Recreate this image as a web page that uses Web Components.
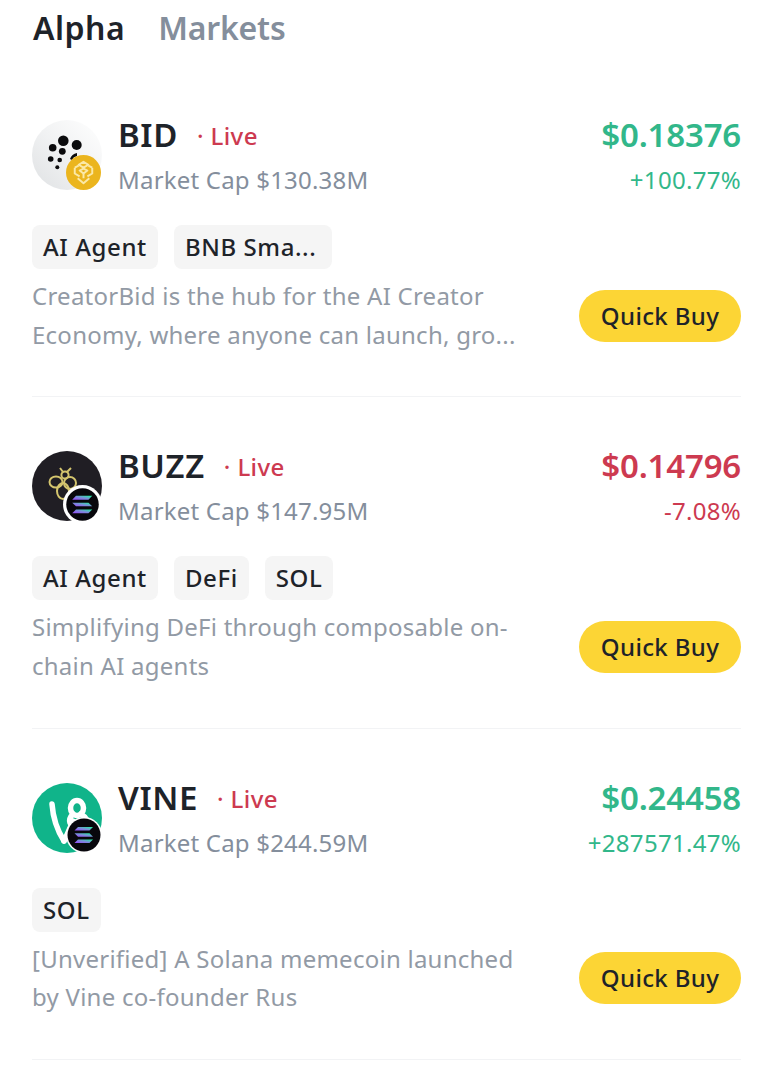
<!DOCTYPE html>
<html><head><meta charset="utf-8"><style>
html,body{margin:0;padding:0;background:#fff;font-family:"Noto Sans","Liberation Sans",sans-serif;}
</style></head><body>
<alpha-page>
<market-tabs></market-tabs>
<token-row name="BID" cap="$130.38M" price="$0.18376" change="+100.77%" dir="up" tags="AI Agent|BNB Sma..." logo="bid" chain="bnb" desc="CreatorBid is the hub for the AI Creator|Economy, where anyone can launch, gro..."></token-row>
<token-row name="BUZZ" cap="$147.95M" price="$0.14796" change="-7.08%" dir="down" tags="AI Agent|DeFi|SOL" logo="buzz" chain="sol" desc="Simplifying DeFi through composable on-|chain AI agents"></token-row>
<token-row name="VINE" cap="$244.59M" price="$0.24458" change="+287571.47%" dir="up" tags="SOL" logo="vine" chain="sol2" desc="[Unverified] A Solana memecoin launched|by Vine co-founder Rus"></token-row>
</alpha-page>
<script>
class AlphaPage extends HTMLElement{constructor(){super();this.attachShadow({mode:'open'}).innerHTML=`<style>:host{display:block;padding:0 32px 0 32px;box-sizing:border-box;width:773px;height:1076px;overflow:hidden;background:#fff}</style><slot></slot>`}}
class MarketTabs extends HTMLElement{constructor(){super();this.attachShadow({mode:'open'}).innerHTML=`<style>
:host{display:flex;gap:33px;height:66px;padding:7px 0 0 1px;box-sizing:border-box;font:600 32px/42px "Noto Sans",sans-serif}
.a{color:#1e2329;letter-spacing:.5px}.b{color:#848e9c;letter-spacing:-.2px}</style><span class="a">Alpha</span><span class="b">Markets</span>`}}
const LOGOS={
bid:`<defs><linearGradient id="g" x1="0" y1="1" x2="1" y2="0"><stop offset="0" stop-color="#dfe1e3"/><stop offset=".5" stop-color="#f1f2f3"/><stop offset="1" stop-color="#fff"/></linearGradient></defs><circle cx="35" cy="35" r="35" fill="url(#g)"/><g fill="#0b0b0d"><circle cx="31.3" cy="20.7" r="5.3"/><circle cx="44.7" cy="25" r="5"/><circle cx="20.7" cy="27.7" r="3.8"/><circle cx="30.3" cy="31.3" r="3.4"/><circle cx="18.7" cy="39" r="2.8"/><circle cx="27.7" cy="40" r="2.3"/><circle cx="25.3" cy="47.3" r="2"/><path d="M38 39a9 9 0 0 1 7-6v3a7 7 0 0 0-5 4z"/></g>`,
buzz:`<circle cx="35" cy="35" r="35" fill="#201e24"/><g fill="none" stroke="#d4c56e" stroke-width="2"><ellipse cx="24" cy="31" rx="6.5" ry="5.5"/><ellipse cx="38" cy="32" rx="6" ry="6"/><ellipse cx="31" cy="40" rx="6" ry="8"/><circle cx="33" cy="24" r="3.6"/><path d="M31 21l-3-4M35 21l4-4"/></g>`,
vine:`<circle cx="35" cy="35" r="35" fill="#10b48a"/><g fill="none" stroke="#fff" stroke-width="5.5" stroke-linecap="round" stroke-linejoin="round"><path d="M20 21c1 14 5 26 12 37"/><path d="M32 58c3-6 6-13 9-20"/><ellipse cx="45" cy="25" rx="6.5" ry="7.5"/><path d="M41 31c-3 3-4 6-3 9"/><path d="M49 31c5 3 7 7 7 12"/></g>`};
const SOL=`<g fill="url(#s)"><path d="M12 10h15l-3.5 3.5H8.5z"/><path d="M8.5 16.3h15l3.5 3.4H12z"/><path d="M12 22.5h15L23.5 26H8.5z"/></g>`;
const SDEF=`<defs><linearGradient id="s" x1="0" y1="1" x2="1" y2="0"><stop offset="0" stop-color="#9945ff"/><stop offset=".5" stop-color="#7a8ed8"/><stop offset="1" stop-color="#19fb9b"/></linearGradient></defs>`;
const CHAINS={
bnb:{size:35,right:1,bottom:0,svg:`<circle cx="18" cy="18" r="18" fill="#ebb51e"/><g fill="none" stroke="#fbe9a8" stroke-width="2" stroke-linejoin="round"><path d="M18 7l5 3-5 3-5-3z"/><path d="M9 13v6l5 3M27 13v6l-5 3"/><path d="M9 13l4-2M27 13l-4-2"/><path d="M14 16l4-2 4 2-4 3z"/><path d="M18 19v5M12 24l6 5 6-5"/></g>`},
sol:{size:39,right:0,bottom:-3,svg:`${SDEF}<circle cx="18" cy="18" r="18" fill="#fff"/><circle cx="18" cy="18" r="15" fill="#08070c"/>${SOL}`},
sol2:{size:36,right:0,bottom:0,svg:`${SDEF}<circle cx="18" cy="18" r="18" fill="#fff"/><circle cx="18" cy="18" r="16.5" fill="#08070c"/>${SOL}`}};
let uid=0;
class TokenLogo extends HTMLElement{connectedCallback(){const u=++uid;const fix=s=>s.replace(/id="g"/g,`id="g${u}"`).replace(/url\(#g\)/g,`url(#g${u})`).replace(/id="s"/g,`id="s${u}"`).replace(/url\(#s\)/g,`url(#s${u})`);
const c=CHAINS[this.getAttribute('chain')];
this.attachShadow({mode:'open'}).innerHTML=`<style>:host{display:block;position:relative;width:70px;height:70px;flex:none}svg{display:block}.c{position:absolute;right:${c.right}px;bottom:${c.bottom}px}</style><svg width="70" height="70" viewBox="0 0 70 70">${fix(LOGOS[this.getAttribute('logo')])}</svg><svg class="c" width="${c.size}" height="${c.size}" viewBox="0 0 36 36">${fix(c.svg)}</svg>`}}
class TagChip extends HTMLElement{constructor(){super();this.attachShadow({mode:'open'}).innerHTML=`<style>:host{display:inline-flex;align-items:center;height:44px;padding:0 11px;border-radius:8px;background:#f5f5f5;color:#1e2329;font:500 24px/44px "Noto Sans",sans-serif;letter-spacing:.6px;white-space:nowrap}</style><slot></slot>`}}
class QuickBuy extends HTMLElement{constructor(){super();this.attachShadow({mode:'open'}).innerHTML=`<style>:host{display:flex;align-items:center;justify-content:center;width:162px;height:52px;border-radius:26px;background:#fcd535;color:#1e2329;font:500 24px/52px "Noto Sans",sans-serif;letter-spacing:.35px;white-space:nowrap;flex:none}</style><slot></slot>`}}
class TokenRow extends HTMLElement{connectedCallback(){const g=k=>this.getAttribute(k);
const col=g('dir')=='up'?'#32b78a':'#cd3a50';
this.attachShadow({mode:'open'}).innerHTML=`<style>
:host{display:block;height:331.3px;box-sizing:border-box;padding-top:54px;border-bottom:1px solid #f2f3f5;font-family:"Noto Sans",sans-serif}
.top{display:flex;align-items:flex-start;height:105px}
.info{margin-left:16px;flex:1}
.nm{display:flex;align-items:center;height:44px;margin-top:-7px;font:600 33px/44px "Noto Sans",sans-serif;color:#1e2329;letter-spacing:.6px}
.live{margin-left:19px;margin-top:2px;font:500 24px/44px "Noto Sans",sans-serif;color:#cd3a50;letter-spacing:.4px}
.cap{font:400 24px/34px "Noto Sans",sans-serif;color:#848e9c;margin-top:6px;letter-spacing:.2px}
.r{text-align:right;margin-top:-7px}
.p{font:600 33px/44px "Noto Sans",sans-serif;color:${col};letter-spacing:-.2px}
.c{font:400 24px/34px "Noto Sans",sans-serif;color:${col};margin-top:6px;letter-spacing:.3px}
.tags{display:flex;gap:16px}
tag-chip.wide{width:136px}
.bot{display:flex;align-items:center;justify-content:space-between;margin-top:8px}
.d{font:400 24px/38.5px "Noto Sans",sans-serif;color:#929aa5;white-space:nowrap;letter-spacing:.25px}
</style>
<div class="top"><token-logo logo="${g('logo')}" chain="${g('chain')}"></token-logo>
<div class="info"><div class="nm"><span>${g('name')}</span><span class="live">· Live</span></div><div class="cap">Market Cap ${g('cap')}</div></div>
<div class="r"><div class="p">${g('price')}</div><div class="c">${g('change')}</div></div></div>
<div class="tags">${g('tags').split('|').map(t=>`<tag-chip${t.endsWith('...')?' class="wide"':''}>${t}</tag-chip>`).join('')}</div>
<div class="bot"><div class="d">${g('desc').split('|').join('<br>')}</div><quick-buy>Quick Buy</quick-buy></div>`}}
customElements.define('alpha-page',AlphaPage);customElements.define('market-tabs',MarketTabs);customElements.define('token-logo',TokenLogo);customElements.define('tag-chip',TagChip);customElements.define('quick-buy',QuickBuy);customElements.define('token-row',TokenRow);
</script></body></html>
